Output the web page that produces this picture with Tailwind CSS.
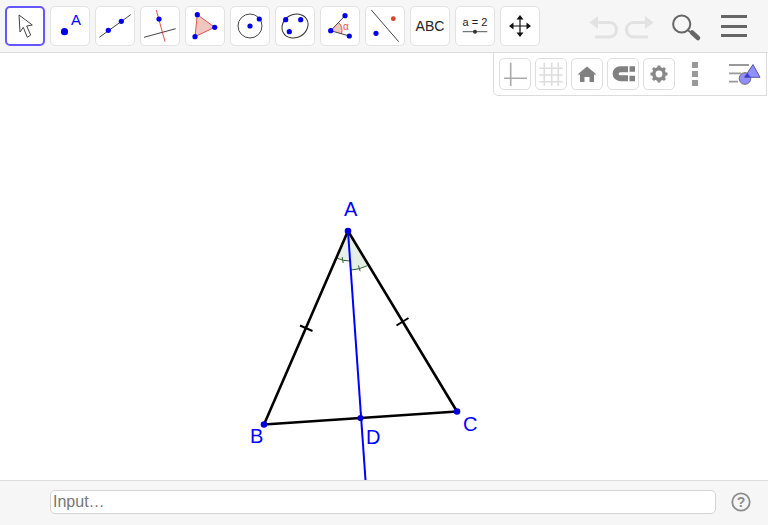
<!DOCTYPE html>
<html lang="en">
<head>
    <meta charset="UTF-8">
    <title>GeoGebra</title>
    <script src="https://cdn.jsdelivr.net/npm/@tailwindcss/browser@4"></script>
</head>
<body class="bg-white font-['Liberation_Sans',Arial,sans-serif]">
<div class="w-[768px] h-[525px] flex flex-col overflow-hidden">

    <!-- toolbar -->
    <header class="h-[53px] shrink-0 bg-[#f6f6f6] border-b border-[#dcdcdc] flex items-start pt-[6px] pl-[5px] gap-[5px] relative">
        <button class="w-10 h-10 bg-white rounded-[5px] border-2 border-[#6557ff] flex items-center justify-center">
            <svg width="36" height="36" viewBox="2 2 36 36"><path d="M14 9 L15 26 L18.3 21.3 L22.3 31.3 L25.7 29 L21.7 20 L27.3 19 Z" fill="#fff" stroke="#444" stroke-width="1" stroke-linejoin="round"/></svg>
        </button>
        <button class="w-10 h-10 bg-white rounded-[5px] border border-[#e2e2e2]">
            <svg width="38" height="38" viewBox="1 1 38 38"><circle cx="14.5" cy="25.7" r="3.6" fill="#0000e6"/><text x="26" y="19" text-anchor="middle" font-size="15" fill="#0000ff">A</text></svg>
        </button>
        <button class="w-10 h-10 bg-white rounded-[5px] border border-[#e2e2e2]">
            <svg width="38" height="38" viewBox="1 1 38 38"><path d="M4.3 31.3 L35.7 8.7" stroke="#444" stroke-width="1"/><circle cx="13.3" cy="24.3" r="2.6" fill="#0000e6"/><circle cx="26.3" cy="15.3" r="2.6" fill="#0000e6"/></svg>
        </button>
        <button class="w-10 h-10 bg-white rounded-[5px] border border-[#e2e2e2]">
            <svg width="38" height="38" viewBox="1 1 38 38"><path d="M16.3 4 L25 35.7" stroke="#e0554a" stroke-width="1"/><path d="M4 31.3 L35.7 22.7" stroke="#444" stroke-width="1"/><circle cx="19" cy="13" r="2.6" fill="#0000e6"/></svg>
        </button>
        <button class="w-10 h-10 bg-white rounded-[5px] border border-[#e2e2e2]">
            <svg width="38" height="38" viewBox="1 1 38 38"><path d="M12.3 8.7 L29.7 21.3 L10 30.7 Z" fill="#f2c6c0" stroke="#e0554a" stroke-width="1"/><circle cx="12.3" cy="8.7" r="2.6" fill="#0000e6"/><circle cx="29.7" cy="21.3" r="2.6" fill="#0000e6"/><circle cx="10" cy="30.7" r="2.6" fill="#0000e6"/></svg>
        </button>
        <button class="w-10 h-10 bg-white rounded-[5px] border border-[#e2e2e2]">
            <svg width="38" height="38" viewBox="1 1 38 38"><circle cx="20" cy="20" r="12" fill="none" stroke="#444" stroke-width="1"/><circle cx="20" cy="20" r="2.6" fill="#0000e6"/><circle cx="29.3" cy="13" r="2.6" fill="#0000e6"/></svg>
        </button>
        <button class="w-10 h-10 bg-white rounded-[5px] border border-[#e2e2e2]">
            <svg width="38" height="38" viewBox="1 1 38 38"><ellipse cx="20" cy="20" rx="13.5" ry="11.5" transform="rotate(-30 20 20)" fill="none" stroke="#333" stroke-width="1"/><circle cx="10.7" cy="13.7" r="2.6" fill="#0000e6"/><circle cx="25.7" cy="13.7" r="2.6" fill="#0000e6"/><circle cx="14.3" cy="25.7" r="2.6" fill="#0000e6"/></svg>
        </button>
        <button class="w-10 h-10 bg-white rounded-[5px] border border-[#e2e2e2]">
            <svg width="38" height="38" viewBox="1 1 38 38"><path d="M10.7 24.7 L18.6 16.5 A11.5 11.5 0 0 1 21.5 27.8 Z" fill="#f2c6c0"/><path d="M18.6 16.5 A11.5 11.5 0 0 1 21.5 27.8" fill="none" stroke="#e0554a" stroke-width="1"/><path d="M25 9.7 L10.7 24.7 L29.3 30" fill="none" stroke="#444" stroke-width="1"/><circle cx="10.7" cy="24.7" r="2.6" fill="#0000e6"/><circle cx="25" cy="9.7" r="2.6" fill="#0000e6"/><circle cx="29.3" cy="30" r="2.6" fill="#0000e6"/><text x="26" y="23.5" text-anchor="middle" font-size="10" fill="#e0554a">α</text></svg>
        </button>
        <button class="w-10 h-10 bg-white rounded-[5px] border border-[#e2e2e2]">
            <svg width="38" height="38" viewBox="1 1 38 38"><path d="M6.3 4 L33.7 35.7" stroke="#444" stroke-width="1"/><circle cx="11" cy="27.3" r="2.6" fill="#0000e6"/><circle cx="28.3" cy="12.7" r="2.4" fill="#d8432f"/></svg>
        </button>
        <button class="w-10 h-10 bg-white rounded-[5px] border border-[#e2e2e2] flex items-center justify-center text-[14px] text-[#222]">ABC</button>
        <button class="w-10 h-10 bg-white rounded-[5px] border border-[#e2e2e2]">
            <svg width="38" height="38" viewBox="1 1 38 38"><text x="20" y="20" text-anchor="middle" font-size="11" fill="#222">a = 2</text><path d="M7.7 25.7 L32.3 25.7" stroke="#555" stroke-width="1"/><circle cx="20" cy="25.7" r="2" fill="#333"/></svg>
        </button>
        <button class="w-10 h-10 bg-white rounded-[5px] border border-[#e2e2e2]">
            <svg width="38" height="38" viewBox="1 1 38 38"><path d="M20 11 V29 M11 20 H29" stroke="#111" stroke-width="1.2"/><path d="M20 9 L16.5 13.5 H23.5 Z M20 31 L16.5 26.5 H23.5 Z M9 20 L13.5 16.5 V23.5 Z M31 20 L26.5 16.5 V23.5 Z" fill="#111"/></svg>
        </button>

        <svg class="absolute left-[585px] top-[10px]" width="75" height="32" viewBox="585 10 75 32">
            <path d="M594 22.5 H609 C619 22.5 619 37 609 37 H595" fill="none" stroke="#e2e2e2" stroke-width="3.2"/>
            <path d="M589.5 22.5 L598 16 V29 Z" fill="#e2e2e2"/>
            <path d="M649 22.5 H634 C624 22.5 624 37 634 37 H648" fill="none" stroke="#e2e2e2" stroke-width="3.2"/>
            <path d="M653.5 22.5 L645 16 V29 Z" fill="#e2e2e2"/>
        </svg>
        <svg class="absolute left-[670px] top-[10px]" width="34" height="34" viewBox="670 10 34 34">
            <circle cx="681.7" cy="24" r="8.6" fill="none" stroke="#666" stroke-width="2"/>
            <path d="M688 30.5 L692 33" stroke="#666" stroke-width="2"/>
            <path d="M692 32.5 L698 38" stroke="#666" stroke-width="4.5" stroke-linecap="round"/>
        </svg>
        <div class="absolute left-[721px] top-[15px] w-[26px] flex flex-col gap-[6.5px]">
            <div class="h-[3px] bg-[#666]"></div>
            <div class="h-[3px] bg-[#666]"></div>
            <div class="h-[3px] bg-[#666]"></div>
        </div>
    </header>

    <!-- graphics view -->
    <main class="flex-1 relative bg-white">
        <svg class="absolute inset-0" width="768" height="427" viewBox="0 53 768 427">
            <path d="M348 231 L337.3 258.3 A30 30 0 0 0 350 261 Z" fill="#e6efe6"/>
            <path d="M348 231 L350.7 270 A39 39 0 0 0 367.3 265.7 Z" fill="#e6efe6"/>
            <path d="M337.3 258.3 A30 30 0 0 0 350 261 M350.7 270 A39 39 0 0 0 367.3 265.7" fill="none" stroke="#2f5f2f" stroke-width="1"/>
            <path d="M342.2 257 L343.2 263 M358.4 265.4 L360.2 271.2" stroke="#2f5f2f" stroke-width="1"/>
            <path d="M348 231 L264 424.5 L457 411.5 Z" fill="none" stroke="#000" stroke-width="2.6" stroke-linejoin="round"/>
            <path d="M300 325.5 L312.5 331 M396.5 325.5 L408.5 318" stroke="#000" stroke-width="2"/>
            <path d="M348 231 L365.5 480" stroke="#0000ff" stroke-width="2"/>
            <circle cx="348" cy="231" r="3.3" fill="#0000d8"/>
            <circle cx="264" cy="424.5" r="3.3" fill="#0000d8"/>
            <circle cx="457" cy="411.5" r="3.3" fill="#0000d8"/>
            <circle cx="360.5" cy="418" r="3.1" fill="#0000d8"/>
            <text x="344" y="216" font-size="20" fill="#0000ff">A</text>
            <text x="250" y="443" font-size="20" fill="#0000ff">B</text>
            <text x="463" y="431" font-size="20" fill="#0000ff">C</text>
            <text x="366" y="444" font-size="20" fill="#0000ff">D</text>
        </svg>

        <!-- style bar -->
        <div class="absolute top-0 right-[1px] w-[274px] h-[43px] bg-white border border-t-0 border-[#dcdcdc] rounded-bl-[5px] flex items-center pl-[5px] gap-1">
            <button class="w-8 h-8 rounded-[5px] border border-[#dedede]">
                <svg width="30" height="30" viewBox="0 0 30 30"><path d="M4 19.3 H27 M10.7 3.7 V27" stroke="#aaa" stroke-width="1.6"/></svg>
            </button>
            <button class="w-8 h-8 rounded-[5px] border border-[#dedede]">
                <svg width="30" height="30" viewBox="0 0 30 30"><path d="M8.3 3.7 V27 M15.7 3.7 V27 M22.3 3.7 V27 M3.3 9.3 H26.7 M3.3 16 H26.7 M3.3 22.7 H26.7" stroke="#ddd" stroke-width="1.6"/></svg>
            </button>
            <button class="w-8 h-8 rounded-[5px] border border-[#dedede]">
                <svg width="30" height="30" viewBox="0 0 30 30"><path d="M15 7.5 L24.5 15.5 H22 V23 H17.5 V18 H12.5 V23 H8 V15.5 H5.5 Z" fill="#808080"/></svg>
            </button>
            <button class="w-8 h-8 rounded-[5px] border border-[#dedede]">
                <svg width="30" height="30" viewBox="0 0 30 30"><path d="M20 10.2 H12.5 C6 10.2 6 19.2 12.5 19.2 H20" fill="none" stroke="#808080" stroke-width="6"/><path d="M21.5 7.2 H27 V12.7 H21.5 Z M21.5 16.7 H27 V22.2 H21.5 Z" fill="#808080"/></svg>
            </button>
            <button class="w-8 h-8 rounded-[5px] border border-[#dedede]">
                <svg width="30" height="30" viewBox="0 0 30 30"><circle cx="15" cy="15" r="5.2" fill="none" stroke="#888" stroke-width="3.4"/><path d="M15 6.5 V23.5 M6.5 15 H23.5 M9 9 L21 21 M21 9 L9 21" stroke="#888" stroke-width="3"/><circle cx="15" cy="15" r="3.4" fill="#fff"/></svg>
            </button>
            <div class="ml-[13px] w-[6px] flex flex-col gap-[3px]">
                <div class="h-[6px] bg-[#999]"></div>
                <div class="h-[6px] bg-[#999]"></div>
                <div class="h-[6px] bg-[#999]"></div>
            </div>
            <svg class="ml-[26px]" width="34" height="30" viewBox="728 59 34 30">
                <path d="M729 65 H749 M729 73.3 H741 M729 81.7 H738" stroke="#999" stroke-width="1.8"/>
                <circle cx="745" cy="78.5" r="5.8" fill="#8f8fff" stroke="#666" stroke-width="1"/>
                <path d="M753 64.5 L760 77.3 H744.5 Z" fill="#8f8fff" stroke="#55559a" stroke-width="1"/>
                <path d="M747.6 73 L750.6 77.3 H744.5 Z" fill="#3a3ae0"/>
            </svg>
        </div>
    </main>

    <!-- input bar -->
    <footer class="h-[45px] shrink-0 bg-[#f6f6f6] border-t border-[#dcdcdc] flex items-center pl-[50px] pb-[2px]">
        <div class="w-[666px] h-6 bg-white border border-[#d4d4d4] rounded-[5px] flex items-center pl-[2px] text-base text-[#757575]">Input…</div>
        <svg class="ml-[15px]" width="20" height="20" viewBox="0 0 20 20"><circle cx="10" cy="10" r="8.7" fill="none" stroke="#8c8c8c" stroke-width="1.8"/><text x="10" y="15" text-anchor="middle" font-size="14" font-weight="bold" fill="#8c8c8c">?</text></svg>
    </footer>
</div>
</body>
</html>
